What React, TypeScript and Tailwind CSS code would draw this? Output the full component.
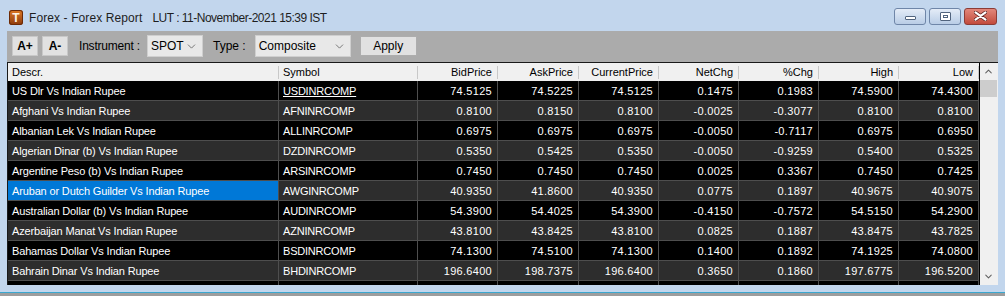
import { ChevronDown, ChevronUp } from "lucide-react";

type Row = {
  descr: string;
  symbol: string;
  values: string[];
};

const rows: Row[] = [
  { descr: "US Dlr Vs Indian Rupee", symbol: "USDINRCOMP", values: ["74.5125", "74.5225", "74.5125", "0.1475", "0.1983", "74.5900", "74.4300"] },
  { descr: "Afghani Vs Indian Rupee", symbol: "AFNINRCOMP", values: ["0.8100", "0.8150", "0.8100", "-0.0025", "-0.3077", "0.8100", "0.8100"] },
  { descr: "Albanian Lek Vs Indian Rupee", symbol: "ALLINRCOMP", values: ["0.6975", "0.6975", "0.6975", "-0.0050", "-0.7117", "0.6975", "0.6950"] },
  { descr: "Algerian Dinar (b) Vs Indian Rupee", symbol: "DZDINRCOMP", values: ["0.5350", "0.5425", "0.5350", "-0.0050", "-0.9259", "0.5400", "0.5325"] },
  { descr: "Argentine Peso (b) Vs Indian Rupee", symbol: "ARSINRCOMP", values: ["0.7450", "0.7450", "0.7450", "0.0025", "0.3367", "0.7450", "0.7425"] },
  { descr: "Aruban or Dutch Guilder Vs Indian Rupee", symbol: "AWGINRCOMP", values: ["40.9350", "41.8600", "40.9350", "0.0775", "0.1897", "40.9675", "40.9075"] },
  { descr: "Australian Dollar (b) Vs Indian Rupee", symbol: "AUDINRCOMP", values: ["54.3900", "54.4025", "54.3900", "-0.4150", "-0.7572", "54.5150", "54.2900"] },
  { descr: "Azerbaijan Manat Vs Indian Rupee", symbol: "AZNINRCOMP", values: ["43.8100", "43.8425", "43.8100", "0.0825", "0.1887", "43.8475", "43.7825"] },
  { descr: "Bahamas Dollar Vs Indian Rupee", symbol: "BSDINRCOMP", values: ["74.1300", "74.5100", "74.1300", "0.1400", "0.1892", "74.1925", "74.0800"] },
  { descr: "Bahrain Dinar Vs Indian Rupee", symbol: "BHDINRCOMP", values: ["196.6400", "198.7375", "196.6400", "0.3650", "0.1860", "197.6775", "196.5200"] },
];

const numCols = [
  { label: "BidPrice", w: "w-[80px]" },
  { label: "AskPrice", w: "w-[81px]" },
  { label: "CurrentPrice", w: "w-[80px]" },
  { label: "NetChg", w: "w-[80px]" },
  { label: "%Chg", w: "w-[80px]" },
  { label: "High", w: "w-[80px]" },
  { label: "Low", w: "w-[80px]" },
];

function WindowButtons() {
  return (
    <div className="flex items-center gap-[3px] pr-[8px] pt-[1px]">
      <div className="flex h-[17px] w-[32px] items-center justify-center rounded-[3px] border border-[#6f86a8] bg-gradient-to-b from-[#e4ecf7] to-[#b9cde6]">
        <div className="mt-[3px] h-[4px] w-[11px] rounded-[1px] border border-[#51647e] bg-white" />
      </div>
      <div className="flex h-[17px] w-[32px] items-center justify-center rounded-[3px] border border-[#6f86a8] bg-gradient-to-b from-[#e4ecf7] to-[#b9cde6]">
        <div className="flex h-[9px] w-[11px] items-center justify-center rounded-[1px] border border-[#51647e] bg-white">
          <div className="h-[3px] w-[5px] border border-[#51647e]" />
        </div>
      </div>
      <div className="flex h-[17px] w-[33px] items-center justify-center rounded-[3px] border border-[#8c3c36] bg-gradient-to-b from-[#e2877b] to-[#c24a3c]">
        <svg width="13" height="10" viewBox="0 0 13 10">
          <path d="M1 1 L12 9 M12 1 L1 9" stroke="#5a2020" strokeWidth="3.6" strokeLinecap="round" />
          <path d="M1.5 1.3 L11.5 8.7 M11.5 1.3 L1.5 8.7" stroke="#ffffff" strokeWidth="2.2" strokeLinecap="round" />
        </svg>
      </div>
    </div>
  );
}

function Select({ value, w }: { value: string; w: string }) {
  return (
    <div className={`flex h-[22px] ${w} items-center justify-between border border-[#cfcfcf] bg-[#e8e8e8] pl-[3px] pr-[4px] text-[12px] text-black`}>
      <span>{value}</span>
      <ChevronDown size={13} strokeWidth={1.4} className="text-[#555]" />
    </div>
  );
}

export default function App() {
  return (
    <div className="flex h-[296px] w-[1005px] flex-col overflow-hidden bg-[#c2d6ed] font-['Liberation_Sans',Arial,sans-serif]">
      <div className="flex h-[31px] shrink-0 items-center justify-between">
        <div className="flex items-center pl-[9px] pt-[4px]">
          <div className="flex h-[15px] w-[14px] items-center justify-center rounded-[3px] bg-gradient-to-b from-[#e07a24] to-[#8c3a0c] shadow-[inset_0_0_0_1px_#6b2a06]">
            <span className="text-[12px] font-bold leading-none text-[#fff3e4]">T</span>
          </div>
          <span className="ml-[6px] text-[12px] tracking-[0.1px] text-[#1e1e1e]">Forex - Forex Report</span>
          <span className="ml-[10px] text-[12px] tracking-[-0.5px] text-[#1e1e1e]">LUT : 11-November-2021 15:39 IST</span>
        </div>
        <WindowButtons />
      </div>

      <div className="mx-[7px] flex flex-col">
        <div className="flex h-[31px] items-center bg-[#ababab] pl-[5px] pb-[1px] text-[12px] text-black">
          <div className="flex h-[20px] w-[26px] items-center justify-center border border-[#c8c8c8] bg-[#e1e1e1] text-[12px] font-bold">A+</div>
          <div className="ml-[4px] flex h-[20px] w-[26px] items-center justify-center border border-[#c8c8c8] bg-[#e1e1e1] text-[12px] font-bold">A-</div>
          <span className="ml-[11px] tracking-[-0.2px]">Instrument :</span>
          <div className="ml-[7px]">
            <Select value="SPOT" w="w-[56px]" />
          </div>
          <span className="ml-[10px]">Type :</span>
          <div className="ml-[9px]">
            <Select value="Composite" w="w-[96px]" />
          </div>
          <div className="ml-[9px] flex h-[20px] w-[57px] items-center justify-center border border-[#adadad] bg-[#e1e1e1]">Apply</div>
        </div>

        <div className="flex h-[223px] border-t border-l border-[#1a1a1a] bg-black">
          <div className="flex w-[971px] flex-col overflow-hidden">
            <div className="flex h-[18px] shrink-0 bg-[#f0f0f0] text-[11px] text-black">
              <div className="flex w-[271px] items-center py-[2px]">
                <span className="flex-1 pl-[4px]">Descr.</span>
                <div className="h-[13px] w-px bg-[#c8c8c8]" />
              </div>
              <div className="flex w-[139px] items-center py-[2px]">
                <span className="flex-1 pl-[4px]">Symbol</span>
                <div className="h-[13px] w-px bg-[#c8c8c8]" />
              </div>
              {numCols.map((c) => (
                <div key={c.label} className={`flex ${c.w} items-center py-[2px]`}>
                  <span className="flex-1 pr-[5px] text-right">{c.label}</span>
                  <div className="h-[13px] w-px bg-[#c8c8c8]" />
                </div>
              ))}
            </div>
            {[...rows, null].map((r, i) => {
              const rowBg = i % 2 === 0 ? "bg-black" : "bg-[#2d2d2d]";
              return (
                <div key={i} className={`flex h-[20px] shrink-0 text-[11px] text-white ${rowBg}`}>
                  <div
                    className={`flex w-[271px] items-center border-r border-b border-[#4e4e4e] pl-[4px] pt-[1px] tracking-[-0.15px] ${
                      i === 5 ? "bg-[#0078d7]" : ""
                    }`}
                  >
                    {r?.descr}
                  </div>
                  <div className={`flex w-[139px] items-center border-r border-b border-[#4e4e4e] pl-[4px] pt-[1px] tracking-[-0.2px] ${i === 0 ? "underline" : ""}`}>
                    {r?.symbol}
                  </div>
                  {numCols.map((c, j) => (
                    <div
                      key={c.label}
                      className={`flex ${c.w} items-center justify-end border-r border-b border-[#4e4e4e] pr-[5px] pt-[1px] tracking-[0.3px]`}
                    >
                      {r?.values[j]}
                    </div>
                  ))}
                </div>
              );
            })}
          </div>
          <div className="ml-px flex w-[17px] flex-col bg-[#f0f0f0]">
            <div className="flex h-[17px] items-center justify-center">
              <ChevronUp size={11} strokeWidth={2.2} className="text-[#606060]" />
            </div>
            <div className="h-[17px] bg-[#cdcdcd]" />
            <div className="flex-1" />
            <div className="flex h-[17px] items-center justify-center">
              <ChevronDown size={11} strokeWidth={2.2} className="text-[#606060]" />
            </div>
          </div>
          <div className="w-px bg-[#f0f0f0]" />
        </div>
      </div>

      <div className="flex-1" />
      <div className="h-px bg-[#3aa7cf]" />
      <div className="h-[3px] bg-[#9d9d9d]" />
    </div>
  );
}
